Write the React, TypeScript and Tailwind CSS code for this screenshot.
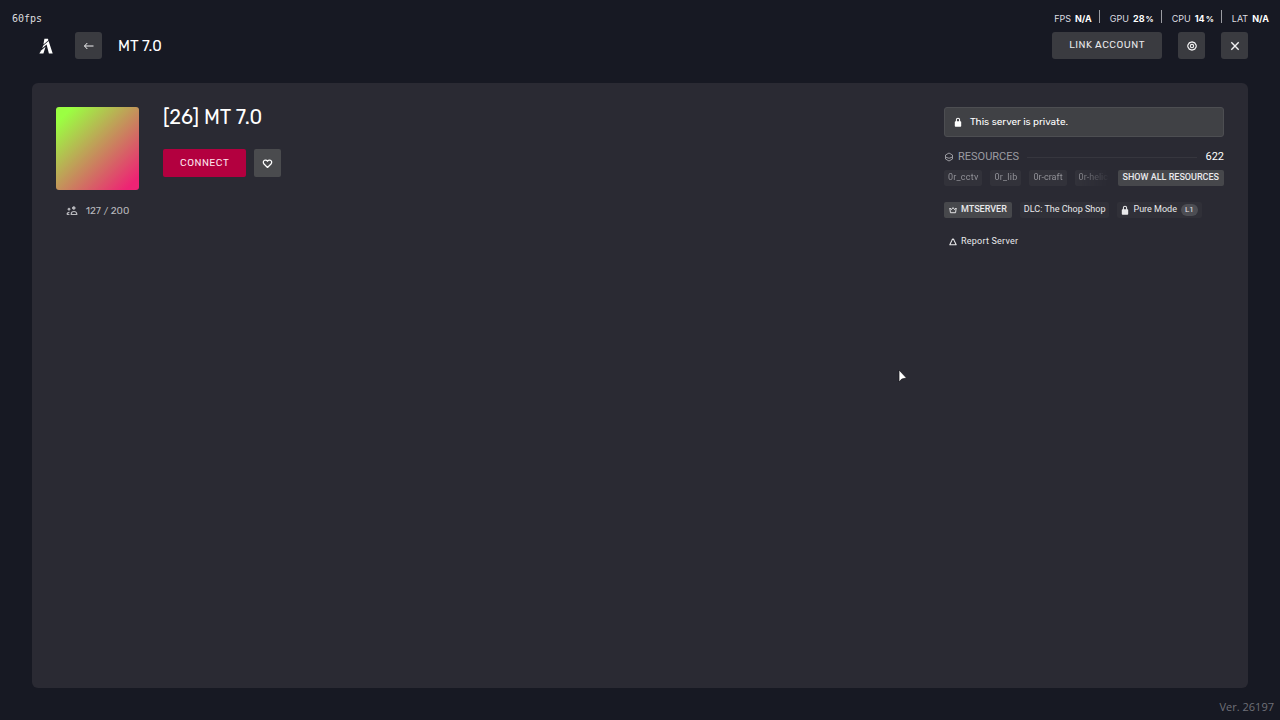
import type { ReactNode } from "react";

const iconButton =
  "flex size-[27px] items-center justify-center rounded-[3px] bg-[#3a3b40] text-[#f1f1f2]";

const LockIcon = () => (
  <svg viewBox="0 0 10 12" className="h-[10px] w-2 shrink-0" fill="none" aria-hidden="true">
    <path d="M3 6V3.2a2 2 0 0 1 4 0V6" stroke="currentColor" strokeWidth="1.3" />
    <rect x="1" y="5" width="8" height="7" rx="1" fill="currentColor" />
  </svg>
);

function Stat({ label, value, unit, last }: { label: string; value: string; unit?: string; last?: boolean }) {
  return (
    <div className="flex items-start">
      <div className="flex items-baseline gap-1 pt-[3px] leading-3">
        <span>{label}</span>
        <span className="font-bold text-white">
          {value}
          {unit && <span className="ml-px text-[8px]">{unit}</span>}
        </span>
      </div>
      {!last && <span className="ml-[7px] mr-[10px] h-[13px] w-px bg-[#9b9ca2]" />}
    </div>
  );
}

function Tag({ children, className = "bg-[#303038] px-1" }: { children: ReactNode; className?: string }) {
  return (
    <span className={`flex h-4 shrink-0 items-center whitespace-nowrap rounded-[2px] ${className}`}>
      {children}
    </span>
  );
}

export default function App() {
  return (
    <div className="relative flex min-h-screen flex-col bg-[#171923] p-8 font-['Rubik','Roboto',sans-serif] text-[#e9e9eb]">
      <div className="absolute left-3 top-[13px] font-['DejaVu_Sans_Mono','Liberation_Mono',monospace] text-[10px] leading-3 text-[#dcdcdf]">60fps</div>
      <div className="absolute right-[11px] top-[10px] flex font-['Inter',sans-serif] text-[9px] text-[#dedee1]">
        <Stat label="FPS" value="N/A" />
        <Stat label="GPU" value="28" unit="%" />
        <Stat label="CPU" value="14" unit="%" />
        <Stat label="LAT" value="N/A" last />
      </div>

      <header className="flex h-[27px] items-center gap-4">
        <a href="#home" aria-label="Home" className="flex size-[27px] items-center justify-center">
          <svg viewBox="0 0 14 16" className="h-4 w-[14px] text-white" fill="currentColor" aria-hidden="true">
            <path d="M5.4.8h3.5l.5 1.5-5 4.3z" />
            <path d="M9.6 3 4.1 7.7 3.2 10.2 7.6 6.6 9.9 15.5h3.8z" />
            <path d="M6.5 8.8 2.4 12.2.3 15.5h4.1z" />
          </svg>
        </a>
        <button type="button" aria-label="Back" className={iconButton}>
          <svg viewBox="0 0 12 12" className="size-3" fill="none" stroke="currentColor" strokeWidth="1" aria-hidden="true">
            <path d="M10.5 6H1.5M4.3 3 1.5 6l2.8 3" />
          </svg>
        </button>
        <span className="text-[15px] leading-5 text-white">MT 7.0</span>
        <div className="ml-auto flex items-center gap-4">
          <button type="button" className="h-[27px] rounded-[3px] bg-[#3a3b40] px-[17px] text-[10px] tracking-wider">LINK ACCOUNT</button>
          <button type="button" aria-label="Settings" className={iconButton}>
            <svg viewBox="0 0 12 12" className="size-[10px]" fill="none" stroke="currentColor" aria-hidden="true">
              <path d="M6 1 9.2 2.2 11 5v2L9.2 9.8 6 11 2.8 9.8 1 7V5l1.8-2.8z" strokeWidth="1.4" />
              <circle cx="6" cy="6" r="2" strokeWidth="1.3" />
            </svg>
          </button>
          <button type="button" aria-label="Close" className={iconButton}>
            <svg viewBox="0 0 10 10" className="size-[10px]" stroke="currentColor" strokeWidth="1.4" aria-hidden="true">
              <path d="m1.3 1.3 7.4 7.4m0-7.4L1.3 8.7" />
            </svg>
          </button>
        </div>
      </header>

      <main className="mt-6 flex flex-1 items-start gap-6 rounded-md bg-[#2a2a33] p-6">
        <div className="flex w-[83px] shrink-0 flex-col items-center gap-3">
          <div className="aspect-square w-full rounded-[3px] bg-[linear-gradient(135deg,#9bff42_10%,#ee2374_92%)]" />
          <div className="flex items-center gap-2 text-[10px] leading-[18px] text-[#b8b8bd]">
            <svg viewBox="0 0 12 10" className="h-[10px] w-3" fill="none" stroke="currentColor" aria-hidden="true">
              <circle cx="7.8" cy="2" r="1.3" fill="currentColor" />
              <circle cx="3" cy="3.2" r="1" fill="currentColor" />
              <path d="M5.2 8.5c0-2 .9-3 2.8-3s2.8 1 2.8 3zM1 8.5h2.4M1.1 8.5c0-1.5.6-2.2 2.3-2.2" strokeWidth="1.2" />
            </svg>
            127 / 200
          </div>
        </div>

        <section className="min-w-0 flex-1">
          <h1 className="text-[20px] leading-5 text-white">[26] MT 7.0</h1>
          <div className="mt-[22px] flex gap-2">
            <button type="button" className="h-7 rounded-[2px] bg-[#b3003f] px-[17px] text-[10px] tracking-wider text-[#ffe5ee]">CONNECT</button>
            <button type="button" aria-label="Add to favorites" className="flex h-7 w-[27px] items-center justify-center rounded-[2px] bg-[#4a4b4e] text-white">
              <svg viewBox="0 0 12 12" className="size-[11px]" fill="none" stroke="currentColor" strokeWidth="1.4" strokeLinejoin="round" aria-hidden="true">
                <path d="M6 10.3 2.2 6.6C.8 5 1.4 2.6 3.3 2.3 4.5 2.1 5.5 2.7 6 3.5c.5-.8 1.5-1.4 2.7-1.2 1.9.3 2.5 2.7 1.1 4.3z" />
              </svg>
            </button>
          </div>
        </section>

        <aside className="w-[280px] shrink-0 font-['Roboto',sans-serif]">
          <div className="flex h-[30px] items-center gap-2 rounded-[3px] border border-[#4d4e52] bg-[#404145] px-[9px] font-['Rubik','Roboto',sans-serif] text-[10px] text-white">
            <LockIcon />
            This server is private.
          </div>

          <div className="mt-3 flex h-4 items-center text-[11px]">
            <svg viewBox="0 0 10 10" className="mr-1 size-[10px] text-[#9a9aa0]" fill="none" stroke="currentColor" aria-hidden="true">
              <path d="m5 1 3.5 2v4L5 9 1.5 7V3zM1.5 5 5 6.3 8.5 5" />
            </svg>
            <h2 className="text-[#9c9ca2]">RESOURCES</h2>
            <span className="mx-2 h-px flex-1 bg-[#36363e]" />
            <span className="text-white">622</span>
          </div>

          <div className="mt-[5px] flex items-center gap-2 text-[9px]">
            <div className="flex min-w-0 flex-1 gap-2 overflow-hidden text-[#929298] [mask-image:linear-gradient(to_right,black_80%,transparent)]">
              <Tag className="bg-[#32323a] px-1 tracking-wide">0r_cctv</Tag>
              <Tag className="bg-[#32323a] px-1 tracking-wide">0r_lib</Tag>
              <Tag className="bg-[#32323a] px-1">0r-craft</Tag>
              <Tag className="bg-[#32323a] pl-1">0r-helic</Tag>
            </div>
            <button type="button" className="h-4 shrink-0 whitespace-nowrap rounded-[2px] bg-[#46474b] px-[5px] font-medium">SHOW ALL RESOURCES</button>
          </div>

          <div className="mt-4 flex items-center gap-2 text-[9px]">
            <Tag className="gap-1 bg-[#47484c] px-[5px] font-medium">
              <svg viewBox="0 0 10 10" className="size-2" fill="none" stroke="currentColor" strokeWidth="1.2" aria-hidden="true">
                <path d="m1 2.5 2 2L5 2l2 2.5 2-2L8.2 8.4H1.8z" />
              </svg>
              MTSERVER
            </Tag>
            <Tag>DLC: The Chop Shop</Tag>
            <Tag className="gap-1 bg-[#303038] px-1">
              <LockIcon />
              Pure Mode
              <span className="flex h-3 items-center rounded-full bg-[#4c4d53] px-1 text-[8px]">L1</span>
            </Tag>
          </div>

          <button type="button" className="mt-4 flex h-4 items-center gap-1 px-[5px] text-[9px] tracking-wide">
            <svg viewBox="0 0 10 10" className="size-2" fill="none" stroke="currentColor" strokeWidth="1.3" strokeLinejoin="round" aria-hidden="true">
              <path d="M3.7 2.7C4.2 1 5.8 1 6.3 2.7L9 8.5H1z" />
            </svg>
            Report Server
          </button>
        </aside>
      </main>

      <footer className="absolute bottom-[5px] right-[6px] font-['Open_Sans',sans-serif] text-[11px] leading-4 text-[#6f7078]">Ver. 26197</footer>
      <svg viewBox="0 0 9 14" className="pointer-events-none absolute left-[898px] top-[369px] h-[14px] w-[9px]" aria-hidden="true">
        <path d="M1 1v12l2.7-2.9L8.5 9z" fill="#fff" stroke="#15151b" strokeWidth=".7" />
      </svg>
    </div>
  );
}
